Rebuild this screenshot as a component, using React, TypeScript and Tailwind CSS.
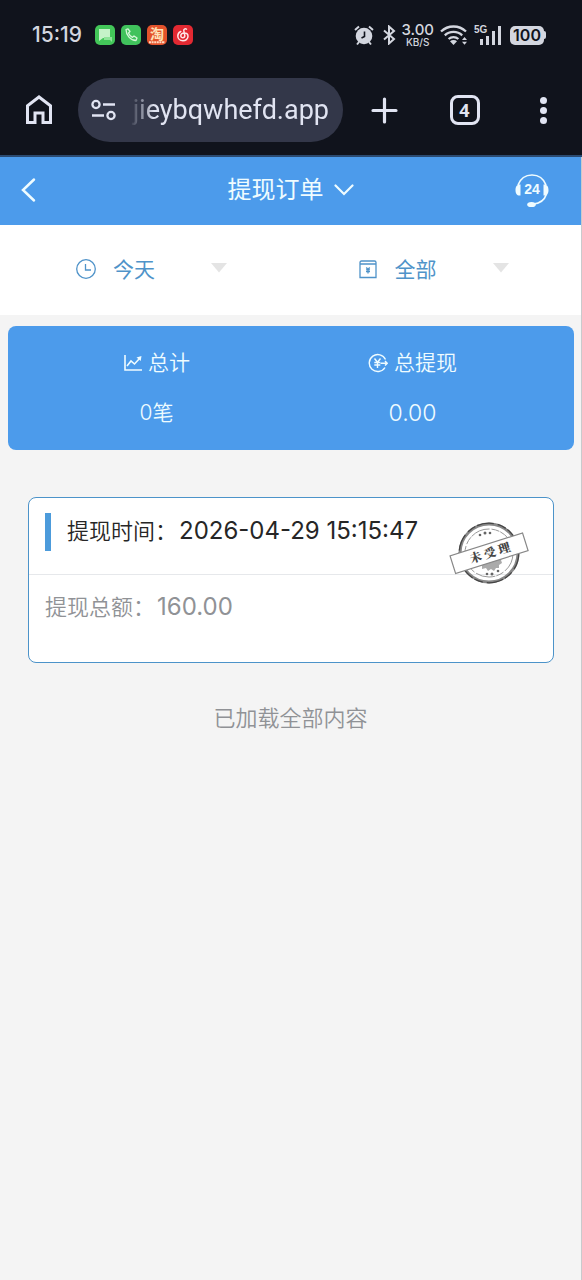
import type { ReactNode } from "react";

function StatusBar() {
  return (
    <div className="flex h-[70px] items-center justify-between pl-8 pr-9 text-[#d3d6df]">
      <div className="flex items-center gap-[6px]">
        <time className="mr-[7px] text-[21px] leading-6 font-medium">15:19</time>
        <svg className="size-5" viewBox="0 0 20 20" aria-hidden="true">
          <rect width="20" height="20" rx="5" fill="#43c759" />
          <path d="M4 4h11v9H8l-4 3z" fill="#c5f3c9" />
          <path d="M9 12h8v5l-2-2H9z" fill="#8ee49a" />
        </svg>
        <svg className="size-5" viewBox="0 0 20 20" aria-hidden="true">
          <rect width="20" height="20" rx="5" fill="#40c25c" />
          <path d="M5 4.500c0 5.500 4.500 11 10 11l1-2.500-3-2-1.500 1.300C9.500 11.300 8 9.500 7.500 8L9 6.500 7 3.800z" fill="none" stroke="#d4f7d8" strokeWidth="1.300" strokeLinejoin="round" />
        </svg>
        <svg className="size-5 overflow-visible" viewBox="0 0 20 20" aria-hidden="true">
          <rect width="20" height="20" rx="5" fill="#e4532c" />
          <text x="10" y="13.500" textAnchor="middle" fontSize="14" fontWeight="700" fill="#ffe3b8" fontFamily="Noto Sans CJK SC, sans-serif">淘</text>
          <path d="M2 17.300h16" stroke="#ffd9c0" strokeWidth="2" strokeDasharray="2 .6" />
        </svg>
        <svg className="size-5" viewBox="0 0 20 20" fill="none" stroke="#ffe7e7" strokeWidth="1.500" strokeLinecap="round" aria-hidden="true">
          <rect width="20" height="20" rx="5" fill="#e32932" stroke="none" />
          <path d="M13.500 4.200c-1.500-.9-3 0-2.700 1.500l1 4.800c.3 2.900-4 2.900-4 .2C7.800 7.500 15 6.500 15 11.200c0 6-10.200 6-10.200-.2 0-2.200 1.200-3.800 3-4.500" />
        </svg>
      </div>
      <div className="flex items-center">
        <svg className="h-[22px] w-5" viewBox="0 0 20 20" aria-hidden="true">
          <circle cx="10" cy="11" r="8.300" fill="currentColor" />
          <path d="M1 5l4-3.500M19 5l-4-3.500M5 17l-2 2.500M15 17l2 2.500" stroke="currentColor" strokeWidth="2" />
          <path d="M10.500 6.500v5L7.500 13" fill="none" stroke="#10131c" strokeWidth="1.600" />
        </svg>
        <svg className="ml-2 h-5 w-[14px]" viewBox="0 0 14 20" fill="none" stroke="currentColor" strokeWidth="2" aria-hidden="true">
          <path d="M2 5.500l10 8.500-5 4.500v-17L12 6 2 14.500" />
        </svg>
        <div className="ml-[5px] flex flex-col items-center font-medium">
          <span className="text-[15px] leading-[14px]">3.00</span>
          <span className="text-[10px] leading-[10px]">KB/S</span>
        </div>
        <svg className="ml-[6px] h-5 w-7" viewBox="0 0 28 20" fill="none" stroke="currentColor" strokeWidth="2.300" aria-hidden="true">
          <path d="M1 6.500C8-.2 19-.2 26 6.500M4.800 10.300c4.800-4.500 12.600-4.500 17.400 0M8.600 14c2.800-2.500 7-2.500 9.800 0" />
          <path d="M10 16.200c2-1.600 5-1.600 7 0L13.500 20z" fill="currentColor" stroke="none" />
          <path d="M22 15l2.500-3 2.500 3zM22 16.800l2.500 3 2.500-3z" fill="currentColor" stroke="none" />
        </svg>
        <svg className="ml-[6px] h-[22px] w-7 overflow-visible" viewBox="0 0 28 22" fill="currentColor" aria-hidden="true">
          <text x="0" y="8.500" fontSize="10" fontWeight="700" fontFamily="Liberation Sans, sans-serif">5G</text>
          <path d="M6 15h3v6H6zM12 12h3v9h-3zM18 7h3v14h-3zM24 2h3v19h-3z" />
        </svg>
        <div className="ml-2 flex h-[19px] w-[34px] items-center justify-center rounded-[5px] bg-[#d3d6df] text-[16px] leading-[19px] font-semibold text-[#10131c]">
          100
        </div>
        <span className="h-2 w-[2px] rounded-r bg-[#d3d6df]" />
      </div>
    </div>
  );
}

function BrowserBar() {
  return (
    <div className="flex h-[87px] items-start border-b-2 border-[#2b4a70] pt-2 pr-[27px] pl-[25px] text-[#e1e4f2]">
      <button type="button" aria-label="主页" className="flex h-16 items-center">
        <svg className="h-8 w-7" viewBox="0 0 28 32" fill="none" stroke="currentColor" strokeWidth="3" aria-hidden="true">
          <path d="M2.500 28.500V11.800L14 3l11.500 8.800v16.700h-7.500V19h-8v9.500z" />
        </svg>
      </button>
      <div className="ml-[25px] flex h-16 w-[265px] items-center gap-[13px] rounded-full bg-[#333749] pl-[13px]">
        <svg className="h-6 w-[26px] shrink-0" viewBox="0 0 26 24" fill="none" stroke="currentColor" strokeWidth="2.300" aria-hidden="true">
          <circle cx="5" cy="6.500" r="3.600" />
          <path d="M12 6.500h12M1 17.500h12" />
          <circle cx="20" cy="17.500" r="3.600" />
        </svg>
        <input
          aria-label="网址"
          type="text"
          defaultValue="jieybqwhefd.app"
          className="w-full min-w-0 bg-transparent pr-[14px] text-right font-[Roboto,sans-serif] text-[27px] leading-9 outline-none [mask-image:linear-gradient(to_right,transparent,#000_24px)]"
        />
      </div>
      <div className="ml-[28px] flex h-16 flex-1 items-center justify-between">
        <button type="button" aria-label="新建标签页">
          <svg className="size-[27px]" viewBox="0 0 27 27" stroke="currentColor" strokeWidth="3.200" strokeLinecap="round" aria-hidden="true">
            <path d="M13.500 2v23M2 13.500h23" />
          </svg>
        </button>
        <button type="button" aria-label="标签页" className="flex size-[30px] items-center justify-center rounded-[8px] border-3 border-current font-['Noto_Sans',sans-serif] text-[18px] leading-5 font-bold">
          4
        </button>
        <button type="button" aria-label="菜单" className="flex w-[24px] flex-col items-center gap-[3px]">
          <span className="size-[7px] rounded-full bg-current" />
          <span className="size-[7px] rounded-full bg-current" />
          <span className="size-[7px] rounded-full bg-current" />
        </button>
      </div>
    </div>
  );
}

function PageHeader() {
  return (
    <header className="grid h-[68px] grid-cols-[1fr_auto_1fr] items-center bg-[#4c9beb] px-5 pb-[2px] text-[#effcff]">
      <button type="button" aria-label="返回" className="justify-self-start">
        <svg className="h-7 w-4" viewBox="0 0 16 28" fill="none" stroke="currentColor" strokeWidth="2.500" strokeLinecap="round" aria-hidden="true">
          <path d="M14 3.500L3 14l11 10.500" />
        </svg>
      </button>
      <button type="button" className="flex items-center gap-[10px] text-[24px] leading-9">
        <span>提现订单</span>
        <svg className="h-3 w-5" viewBox="0 0 20 12" fill="none" stroke="currentColor" strokeWidth="2.200" strokeLinecap="round" aria-hidden="true">
          <path d="M1.500 1.500L10 10l8.500-8.500" />
        </svg>
      </button>
      <button type="button" aria-label="24小时客服" className="mr-[11px] justify-self-end">
        <svg className="h-[34px] w-9 overflow-visible" viewBox="0 0 36 34" fill="none" stroke="currentColor" strokeWidth="1.700" aria-hidden="true">
          <path d="M4 12C6.500 5.500 11.500 2 18 2s11.500 3.500 14 10M32.500 21c-2 6-7 9.500-13 10" />
          <path d="M6.500 11.500v11c-3.500.5-5-2-5-5.500s1.500-6 5-5.500zM29.500 11.500v11c3.500.5 5-2 5-5.500s-1.500-6-5-5.500z" fill="currentColor" stroke="none" />
          <ellipse cx="17.500" cy="31.500" rx="4.300" ry="2.600" fill="currentColor" stroke="none" />
          <text x="18" y="21" textAnchor="middle" fontSize="14" fontWeight="700" fill="currentColor" stroke="none" fontFamily="Liberation Sans, sans-serif">24</text>
        </svg>
      </button>
    </header>
  );
}

function Filter({ label, value, options, icon }: { label: string; value: string; options: string[]; icon: ReactNode }) {
  return (
    <div className="flex items-center pl-[75px] text-[#4f93c9]">
      {icon}
      <select aria-label={label} defaultValue={value} className="ml-4 w-[98px] appearance-none bg-transparent text-[21px] leading-8 outline-none">
        {options.map((o) => (
          <option key={o}>{o}</option>
        ))}
      </select>
      <svg className="mb-1 h-[10px] w-4" viewBox="0 0 16 10" fill="#e4e4e4" aria-hidden="true">
        <path d="M0 0h16L8 9.500z" />
      </svg>
    </div>
  );
}

function Filters() {
  return (
    <section className="grid h-[90px] grid-cols-2 items-center bg-white">
      <Filter
        label="时间"
        value="今天"
        options={["今天", "昨天", "近七天"]}
        icon={
          <svg className="size-[22px]" viewBox="0 0 22 22" fill="none" stroke="currentColor" strokeWidth="1.300" aria-hidden="true">
            <circle cx="11" cy="10" r="9.300" />
            <path d="M10.500 5v6h5.500" />
          </svg>
        }
      />
      <Filter
        label="状态"
        value="全部"
        options={["全部", "未受理", "已完成"]}
        icon={
          <svg className="-ml-[9px] size-[22px]" viewBox="0 0 22 22" fill="none" stroke="currentColor" strokeWidth="1.300" aria-hidden="true">
            <path d="M3 5V3.500Q3 2 4.500 2h13Q19 2 19 3.500V5M3 5h16v13.500H3z" />
            <path d="M9.300 8.500l1.700 2 1.700-2M9 10.800h4M9 12.600h4M11 10.500V14.500" />
          </svg>
        }
      />
    </section>
  );
}

function Summary() {
  return (
    <section className="mr-[7px] ml-2 mt-[11px] rounded-lg bg-[#4c9beb] px-[22px] py-[21px] text-[#effcff]">
      <dl className="grid grid-cols-2 text-center text-[21px] leading-8 font-[350]">
        <div className="mr-2 flex flex-col gap-[18px]">
          <dt className="flex items-center justify-center gap-[5px]">
            <svg className="size-5" viewBox="0 0 20 20" fill="none" stroke="currentColor" strokeWidth="1.600" aria-hidden="true">
              <path d="M2 2v15h17M4 13l4-5 3.500 3 5.500-6" />
              <path d="M13.500 4.500l5-1.500-.8 5z" fill="currentColor" stroke="none" />
            </svg>
            总计
          </dt>
          <dd>0笔</dd>
        </div>
        <div className="mr-[18px] flex flex-col gap-[18px]">
          <dt className="flex items-center justify-center gap-[6px]">
            <svg className="size-5" viewBox="0 0 20 20" fill="none" stroke="currentColor" strokeWidth="1.400" aria-hidden="true">
              <path d="M17.500 6.500a8.500 8.500 0 1 0-.5 8M12.500 10.200H19M17 8l2.200 2.200L17 12.500" />
              <path d="M6.500 5.500l3 3.800 3-3.800M6.300 9.500h6M6.300 12h6M9.500 9v6" />
            </svg>
            总提现
          </dt>
          <dd className="text-[23px]">0.00</dd>
        </div>
      </dl>
    </section>
  );
}

function Stamp() {
  return (
    <svg className="absolute top-[22px] right-6 h-[66px] w-[80px]" viewBox="0 0 80 66" fill="none" aria-label="未受理" role="img">
      <circle cx="40" cy="33" r="29" stroke="#888" strokeWidth="3" />
      <circle cx="40" cy="33" r="29.800" stroke="#444" strokeWidth="1.300" strokeDasharray="17 4 9 2" />
      <circle cx="40" cy="33" r="24" stroke="#999" strokeWidth="1" strokeDasharray="20 2 8 1" />
      <g fill="#666">
        <circle cx="31" cy="15" r="1.300" />
        <circle cx="36" cy="13" r="1.500" />
        <circle cx="41" cy="13" r="1.300" />
        <circle cx="38" cy="54" r="1.300" />
        <circle cx="43" cy="54" r="1.500" />
        <circle cx="49" cy="51" r="1.300" />
      </g>
      <path d="M27 42l3 2-1 2h4v3l4-1 2 3 3-2 3 2 2-3h3v-3l3-2-1-3 2-3z" fill="#aaa" />
      <g transform="rotate(-17.500 40 33)">
        <rect x="2" y="24" width="76" height="18.500" fill="#fff" stroke="#888" strokeWidth="1.200" />
        <text x="41" y="37.500" textAnchor="middle" fontSize="12" fontWeight="900" fill="#444" fontFamily="Noto Serif CJK SC, Noto Sans CJK SC, serif">未 受 理</text>
      </g>
    </svg>
  );
}

function OrderCard() {
  return (
    <article className="relative mr-[27px] ml-7 mt-[47px] rounded-lg border border-[#4c93c9] bg-white text-[22px] leading-8">
      <div className="flex h-[77px] items-start border-b border-[#e6e8eb] pt-[15px] pl-4">
        <span className="h-[38px] w-[6px] bg-[#4c9bdb]" />
        <h2 className="ml-4 flex gap-[2px] pt-[2px] font-[350] whitespace-nowrap text-[#262626]">
          提现时间：<span className="text-[24px] font-normal">2026-04-29 15:15:47</span>
        </h2>
      </div>
      <p className="flex h-[87px] gap-[2px] pt-4 pl-4 font-[350] text-[#909296]">
        提现总额：<span className="text-[24px] font-normal">160.00</span>
      </p>
      <Stamp />
    </article>
  );
}

export default function App() {
  return (
    <div className="min-h-screen bg-[#10131c] font-[Inter,'Noto_Sans_CJK_SC',sans-serif]">
      <StatusBar />
      <BrowserBar />
      <main className="min-h-[calc(100vh-157px)] border-r border-[#c9cacc] bg-[#f4f4f4]">
        <PageHeader />
        <Filters />
        <Summary />
        <OrderCard />
        <p className="mt-[39px] text-center text-[22px] leading-8 font-[350] text-[#909296]">已加载全部内容</p>
      </main>
    </div>
  );
}
